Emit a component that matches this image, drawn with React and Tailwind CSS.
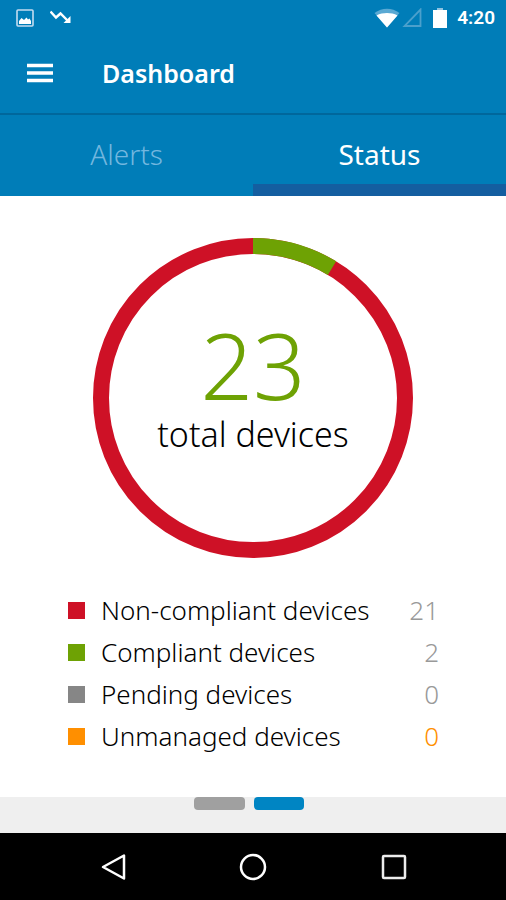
const legend = [
  { label: "Non-compliant devices", count: 21, swatch: "bg-[#ce1126]", tone: "text-[#999999]" },
  { label: "Compliant devices", count: 2, swatch: "bg-[#6ea204]", tone: "text-[#999999]" },
  { label: "Pending devices", count: 0, swatch: "bg-[#868686]", tone: "text-[#999999]" },
  { label: "Unmanaged devices", count: 0, swatch: "bg-[#ff8f00]", tone: "text-[#ff8f00]" },
];

function StatusBar() {
  return (
    <div className="flex h-9 items-center justify-between pr-[11px] pl-4 text-white">
      <div className="flex items-center gap-4">
        <svg className="h-[18px] w-[18px]" viewBox="0 0 18 18" aria-hidden="true">
          <rect x="1" y="1" width="16" height="16" rx="1" fill="none" stroke="#c3dcf0" strokeWidth="1.6" />
          <path d="M3 15V12L5.500 9L8 11L10.500 8.500L12 10.500L13.500 9.500L15 12V15Z" fill="#fff" />
        </svg>
        <svg className="h-4 w-[22px]" viewBox="0 0 22 16" aria-hidden="true">
          <path d="M0.500 1.500L6 7.500L10.500 3.500L18 11" fill="none" stroke="#fff" strokeWidth="2.400" />
          <path d="M20.500 6V13H13.500Z" fill="#fff" />
        </svg>
      </div>
      <div className="flex items-center">
        <svg className="h-5 w-[26px]" viewBox="0 0 26 20" aria-hidden="true">
          <path d="M0.5 5C8 -0.8 18 -0.8 25.5 5L13 19.500Z" fill="#5aa9d3" />
          <path d="M2.500 7.500C9 4.300 17 4.300 23.500 7.500L13 19.500Z" fill="#fff" />
        </svg>
        <svg className="ml-[2px] h-5 w-5" viewBox="0 0 20 20" aria-hidden="true">
          <path d="M2.500 18H18.500V1.500Z" fill="none" stroke="#4ba0cc" strokeWidth="1.800" />
        </svg>
        <svg className="ml-[11px] h-5 w-[14px]" viewBox="0 0 14 20" aria-hidden="true">
          <rect x="4" width="6" height="3" fill="#8fc3e0" />
          <rect y="2" width="14" height="18" fill="#fff" />
        </svg>
        <span className="ml-[10px] font-['Roboto',sans-serif] text-[19px] leading-6 font-semibold">4:20</span>
      </div>
    </div>
  );
}

function DeviceRing() {
  const radius = 152;
  const length = 2 * Math.PI * radius;
  const green = (length * 2) / 23;
  return (
    <div className="mx-auto grid w-80 place-items-center">
      <svg className="col-start-1 row-start-1 h-80 w-80" viewBox="0 0 320 320" role="img" aria-label="2 of 23 devices compliant">
        <circle cx="160" cy="160" r={radius} fill="none" stroke="#ce1126" strokeWidth="16" />
        <circle
          cx="160"
          cy="160"
          r={radius}
          fill="none"
          stroke="#6ea204"
          strokeWidth="16"
          strokeDasharray={`${green} ${length}`}
          transform="rotate(-90 160 160)"
        />
      </svg>
      <div className="col-start-1 row-start-1 flex flex-col items-center pb-3">
        <span className="text-[92px] leading-[84px] font-light text-[#6ea204]">23</span>
        <span className="text-[34px] leading-[54px] font-light text-black">total devices</span>
      </div>
    </div>
  );
}

export default function App() {
  return (
    <div className="flex min-h-screen flex-col bg-white font-['Noto_Sans',sans-serif]">
      <header className="bg-[#007db8]">
        <StatusBar />
        <div className="flex h-[77px] items-center gap-[49px] pb-1 pl-[27px] text-white">
          <button type="button" aria-label="Open menu" className="block">
            <svg className="h-5 w-[26px]" viewBox="0 0 26 20" aria-hidden="true">
              <path d="M0 2.500H26M0 10H26M0 17.500H26" stroke="#fff" strokeWidth="3.500" />
            </svg>
          </button>
          <h1 className="text-[25px] leading-8 font-semibold">Dashboard</h1>
        </div>
      </header>

      <nav role="tablist" className="grid h-[83px] grid-cols-2 border-t-2 border-[#00679c] bg-[#007db8] text-[28px] leading-9">
        <button type="button" role="tab" aria-selected="false" className="border-b-12 border-[#007db8] pt-2 font-light text-[#73b7df]">
          Alerts
        </button>
        <button type="button" role="tab" aria-selected="true" className="border-b-12 border-[#145ea0] pt-2 text-white">
          Status
        </button>
      </nav>

      <main className="flex-1 pt-[42px] pb-9">
        <DeviceRing />
        <ul className="mt-[31px] pr-[67px] pl-[68px]">
          {legend.map((row) => (
            <li key={row.label} className="flex h-[42px] items-center text-[26px] leading-8">
              <span className={`h-[17px] w-[17px] ${row.swatch}`} />
              <span className="ml-4 flex-1 font-light text-black">{row.label}</span>
              <span className={`font-light ${row.tone}`}>{row.count}</span>
            </li>
          ))}
        </ul>
      </main>

      <div className="flex h-9 items-start justify-center gap-[9px] bg-[#efefef] pr-2">
        <button type="button" aria-label="Page 1" className="h-[13px] w-[51px] rounded-sm bg-[#a0a0a0]" />
        <button type="button" aria-label="Page 2" aria-current="page" className="h-[13px] w-[50px] rounded-sm bg-[#0085c3]" />
      </div>

      <footer className="grid h-[67px] grid-cols-[1fr_28px_1fr] items-center bg-black">
        <button type="button" aria-label="Back" className="mr-[112px] justify-self-end">
          <svg className="h-7 w-7" viewBox="0 0 28 28" aria-hidden="true">
            <path d="M25 2.500V25.500L4 14Z" fill="none" stroke="#fff" strokeWidth="2.500" strokeLinejoin="round" />
          </svg>
        </button>
        <button type="button" aria-label="Home">
          <svg className="h-7 w-7" viewBox="0 0 28 28" aria-hidden="true">
            <circle cx="14" cy="14" r="12" fill="none" stroke="#fff" strokeWidth="2.500" />
          </svg>
        </button>
        <button type="button" aria-label="Recent apps" className="ml-[113px] justify-self-start">
          <svg className="h-7 w-7" viewBox="0 0 28 28" aria-hidden="true">
            <rect x="3" y="3" width="22" height="22" rx="1" fill="none" stroke="#ececec" strokeWidth="2.500" />
          </svg>
        </button>
      </footer>
    </div>
  );
}
